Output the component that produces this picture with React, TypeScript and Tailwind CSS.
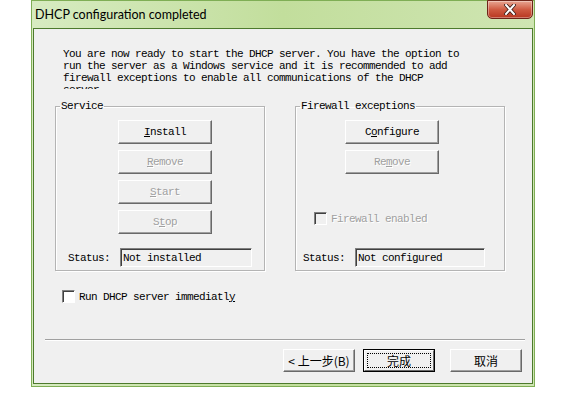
import type { ReactNode } from "react";

const MONO = "font-['Liberation_Mono','DejaVu_Sans_Mono',monospace] text-[11px] tracking-[-0.6px] leading-[12px]";

function WinButton({
  children,
  disabled = false,
  width = "w-[94px]",
  height = "h-[24px]",
}: {
  children: ReactNode;
  disabled?: boolean;
  width?: string;
  height?: string;
}) {
  return (
    <button
      disabled={disabled}
      className={`${width} ${height} flex items-center justify-center bg-[#f0f0f0] border border-t-white border-l-white border-r-[#696969] border-b-[#696969] shadow-[inset_-1px_-1px_0_#a0a0a0] ${MONO} ${
        disabled ? "text-[#a0a0a0] [text-shadow:1px_1px_0_#fff]" : "text-black"
      }`}
    >
      {children}
    </button>
  );
}

function CheckBox({ disabled = false }: { disabled?: boolean }) {
  return (
    <span
      className={`w-[13px] h-[13px] shrink-0 border border-t-[#808080] border-l-[#808080] border-b-white border-r-white shadow-[inset_1px_1px_0_#404040] ${
        disabled ? "bg-[#f0f0f0]" : "bg-white"
      }`}
    />
  );
}

function StatusField({ value, width }: { value: string; width: string }) {
  return (
    <div
      className={`${width} h-[19px] flex items-center pl-[2px] border border-t-[#808080] border-l-[#808080] border-b-white border-r-white shadow-[inset_1px_1px_0_#404040] bg-[#f0f0f0] ${MONO} text-black`}
    >
      {value}
    </div>
  );
}

function GroupBox({ title, children }: { title: string; children: ReactNode }) {
  return (
    <fieldset className="w-[210px] border border-[#b4b4b4] shadow-[1px_1px_0_#fff,inset_1px_1px_0_#fff] flex flex-col">
      <legend className={`ml-[4px] px-[1px] ${MONO} text-black`}>{title}</legend>
      {children}
    </fieldset>
  );
}

export default function App() {
  return (
    <div className="w-[562px] h-[393px] bg-white flex pl-[31px] overflow-hidden">
      <div className="relative w-[504px] h-[387px] flex flex-col border border-[#7fae55] bg-gradient-to-r from-[#d7ebc1] via-[#c2de9c] to-[#cfe5b2]">
        {/* title bar */}
        <div className="h-[27px] flex items-center pl-[3px] pt-[1px]">
          <span className="font-['Lato','Liberation_Sans',sans-serif] text-[12.5px] text-black">
            DHCP configuration completed
          </span>
        </div>
        <button className="absolute top-[-1px] right-[1px] w-[46px] h-[19px] rounded-b-[5px] border border-[#6e2418] bg-gradient-to-b from-[#e7a592] via-[#cf5b42] to-[#b8361f] flex items-center justify-center shadow-[inset_0_0_0_1px_rgba(255,255,255,0.35)]">
          <svg width="12" height="11" viewBox="0 0 12 11">
            <path d="M2 1 L10 10 M10 1 L2 10" stroke="#3a1a14" strokeWidth="3.6" strokeLinecap="square" />
            <path d="M2 1 L10 10 M10 1 L2 10" stroke="#ffffff" strokeWidth="2" strokeLinecap="square" />
          </svg>
        </button>

        {/* client area */}
        <div className="flex-1 mx-[1px] mb-[2px] border border-[#4d7a2d] bg-[#f0f0f0] flex flex-col">
          <div className={`ml-[29px] mt-[19px] h-[41px] overflow-hidden ${MONO} text-black whitespace-pre`}>
            <div>You are now ready to start the DHCP server. You have the option to</div>
            <div>run the server as a Windows service and it is recommended to add</div>
            <div>firewall exceptions to enable all communications of the DHCP</div>
            <div>server.</div>
          </div>

          <div className="flex mt-[11px] ml-[21px] gap-[30px]">
            <GroupBox title="Service">
              <div className="flex flex-col gap-[6px] ml-[62px] mt-[8px]">
                <WinButton>
                  <span className="underline">I</span>nstall
                </WinButton>
                <WinButton disabled>
                  <span className="underline">R</span>emove
                </WinButton>
                <WinButton disabled>
                  <span className="underline">S</span>tart
                </WinButton>
                <WinButton disabled>
                  S<span className="underline">t</span>op
                </WinButton>
              </div>
              <div className="flex items-center mt-[14px] mb-[3px] ml-[12px]">
                <span className={`${MONO} text-black w-[52px]`}>Status:</span>
                <StatusField value="Not installed" width="w-[132px]" />
              </div>
            </GroupBox>

            <GroupBox title="Firewall exceptions">
              <div className="flex flex-col gap-[6px] ml-[49px] mt-[8px]">
                <WinButton>
                  C<span className="underline">o</span>nfigure
                </WinButton>
                <WinButton disabled>
                  Re<span className="underline">m</span>ove
                </WinButton>
              </div>
              <div className="flex items-center gap-[4px] ml-[18px] mt-[38px]">
                <CheckBox disabled />
                <span className={`${MONO} text-[#a0a0a0] [text-shadow:1px_1px_0_#fff]`}>Firewall enabled</span>
              </div>
              <div className="flex items-center mt-[23px] mb-[3px] ml-[7px]">
                <span className={`${MONO} text-black w-[52px]`}>Status:</span>
                <StatusField value="Not configured" width="w-[130px]" />
              </div>
            </GroupBox>
          </div>

          <div className="flex items-center gap-[4px] ml-[28px] mt-[19px]">
            <CheckBox />
            <span className={`${MONO} text-black`}>
              Run DHCP server immediatl<span className="underline">y</span>
            </span>
          </div>

          <div className="ml-[11px] mr-[7px] mt-[36px] h-[2px] border-t border-t-[#a0a0a0] border-b border-b-white" />

          <div className="flex justify-end mt-[8px] mr-[10px]">
            <button className="w-[72px] h-[23px] flex items-center justify-center bg-[#f0f0f0] border border-t-white border-l-white border-r-[#696969] border-b-[#696969] shadow-[inset_-1px_-1px_0_#a0a0a0] font-['Noto_Sans_CJK_SC',sans-serif] text-[12px] text-black">
              &lt; 上一步(B)
            </button>
            <button className="ml-[8px] w-[72px] h-[23px] border border-black bg-[#f0f0f0] flex">
              <span className="flex-1 flex border border-t-white border-l-white border-r-[#696969] border-b-[#696969] p-[2px]">
                <span className="flex-1 flex items-center justify-center border border-dotted border-black font-['Noto_Sans_CJK_SC',sans-serif] text-[12px] text-black">
                  完成
                </span>
              </span>
            </button>
            <button className="ml-[15px] w-[72px] h-[23px] flex items-center justify-center bg-[#f0f0f0] border border-t-white border-l-white border-r-[#696969] border-b-[#696969] shadow-[inset_-1px_-1px_0_#a0a0a0] font-['Noto_Sans_CJK_SC',sans-serif] text-[12px] text-black">
              取消
            </button>
          </div>
        </div>
      </div>
    </div>
  );
}
